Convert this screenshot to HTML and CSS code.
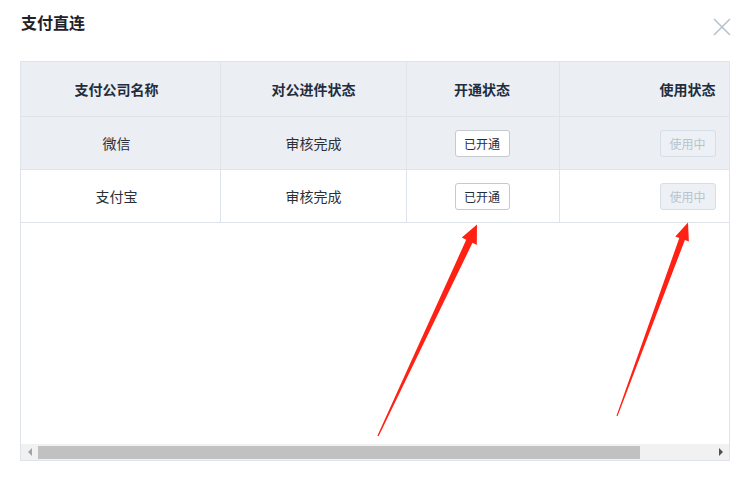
FILE: index.html
```html
<!DOCTYPE html>
<html lang="zh-CN">
<head>
<meta charset="utf-8">
<title>支付直连</title>
<link rel="stylesheet" href="styles.css">
</head>
<body>
<div class="dialog">
  <div class="dialog-header">
    <div class="dialog-title">支付直连</div>
    <svg class="close" width="18" height="18" viewBox="0 0 18 18">
      <path d="M1 1 L17 17 M17 1 L1 17" stroke="#b7c2cf" stroke-width="1.6" fill="none"/>
    </svg>
  </div>
  <div class="table-wrap">
    <div class="table-body">
      <div class="rows">
        <div class="row head">
          <div class="cell c1">支付公司名称</div>
          <div class="cell c2">对公进件状态</div>
          <div class="cell c3">开通状态</div>
          <div class="cell c4">使用状态</div>
        </div>
        <div class="row stripe">
          <div class="cell c1">微信</div>
          <div class="cell c2">审核完成</div>
          <div class="cell c3"><span class="btn">已开通</span></div>
          <div class="cell c4"><span class="btn disabled">使用中</span></div>
        </div>
        <div class="row">
          <div class="cell c1">支付宝</div>
          <div class="cell c2">审核完成</div>
          <div class="cell c3"><span class="btn">已开通</span></div>
          <div class="cell c4"><span class="btn disabled">使用中</span></div>
        </div>
      </div>
    </div>
    <div class="hscroll">
      <div class="sb-btn left"><span class="tri-left"></span></div>
      <div class="sb-track"><div class="sb-thumb"></div></div>
      <div class="sb-btn right"><span class="tri-right"></span></div>
    </div>
  </div>
</div>
<svg class="arrows" width="743" height="480" viewBox="0 0 743 480">
  <polygon fill="#ff2214" points="377.4,435.8 466.2,239.8 461.8,237.6 477,224.5 476.8,245 472.5,242.8 378.6,436.3"/>
  <polygon fill="#ff2214" points="616.5,415.8 679.3,238 675.3,236.4 688,222.5 688.9,241.6 684.9,240 617.5,416.2"/>
</svg>
</body>
</html>
```

FILE: styles.css
```css
* { box-sizing: border-box; }
html, body {
  margin: 0;
  padding: 0;
  background: #ffffff;
}
body {
  font-family: "Noto Sans CJK SC", "Noto Sans", "Liberation Sans", sans-serif;
  color: #2b2f36;
  width: 743px;
  height: 480px;
  overflow: hidden;
  position: relative;
}
.dialog {
  padding: 0 12px 0 20px;
}
.dialog-header {
  height: 61px;
  display: flex;
  justify-content: space-between;
  align-items: flex-start;
}
.dialog-title {
  padding-top: 11px;
  padding-left: 1px;
  font-size: 16px;
  line-height: 22px;
  font-weight: bold;
  color: #1f2329;
}
.close {
  margin-top: 18px;
  display: block;
}
.table-wrap {
  width: 710px;
  height: 400px;
  border: 1px solid #dfe4eb;
  display: flex;
  flex-direction: column;
}
.table-body {
  flex: 1;
  overflow: hidden;
}
.rows {
  width: 797px;
}
.row {
  display: flex;
  height: 53px;
  border-bottom: 1px solid #dfe4eb;
  background: #fff;
}
.row.head {
  height: 55px;
  background: #ebeef3;
  font-weight: bold;
  color: #1f2d3d;
}
.row.stripe {
  background: #ebeef3;
}
.cell {
  display: flex;
  align-items: center;
  justify-content: center;
  font-size: 14px;
  border-right: 1px solid #dfe4eb;
}
.c1 { width: 200px; padding-right: 8px; }
.c2 { width: 186px; }
.c3 { width: 153px; padding-right: 2px; }
.c4 { width: 258px; padding-right: 3px; border-right: none; }
.btn {
  display: inline-flex;
  align-items: center;
  justify-content: center;
  width: 55px;
  height: 27px;
  font-size: 12px;
  color: #1f2d3d;
  background: #fff;
  border: 1px solid #c6c9ce;
  border-radius: 3px;
}
.btn.disabled {
  width: 56px;
  color: #b9c3ce;
  background: #edf1f5;
  border-color: #d6dee7;
}
.hscroll {
  height: 16px;
  display: flex;
  background: #f1f1f1;
}
.sb-btn {
  width: 17px;
  display: flex;
  align-items: center;
  justify-content: center;
}
.sb-btn.right { width: 16px; }
.tri-left {
  width: 0; height: 0;
  border-top: 4px solid transparent;
  border-bottom: 4px solid transparent;
  border-right: 4px solid #a3a3a3;
}
.tri-right {
  width: 0; height: 0;
  border-top: 4px solid transparent;
  border-bottom: 4px solid transparent;
  border-left: 4px solid #505050;
}
.sb-track {
  flex: 1;
  padding: 2px 0 1px;
}
.sb-thumb {
  width: 602px;
  height: 13px;
  background: #c1c1c1;
}
.arrows {
  position: absolute;
  left: 0;
  top: 0;
  pointer-events: none;
}
```
